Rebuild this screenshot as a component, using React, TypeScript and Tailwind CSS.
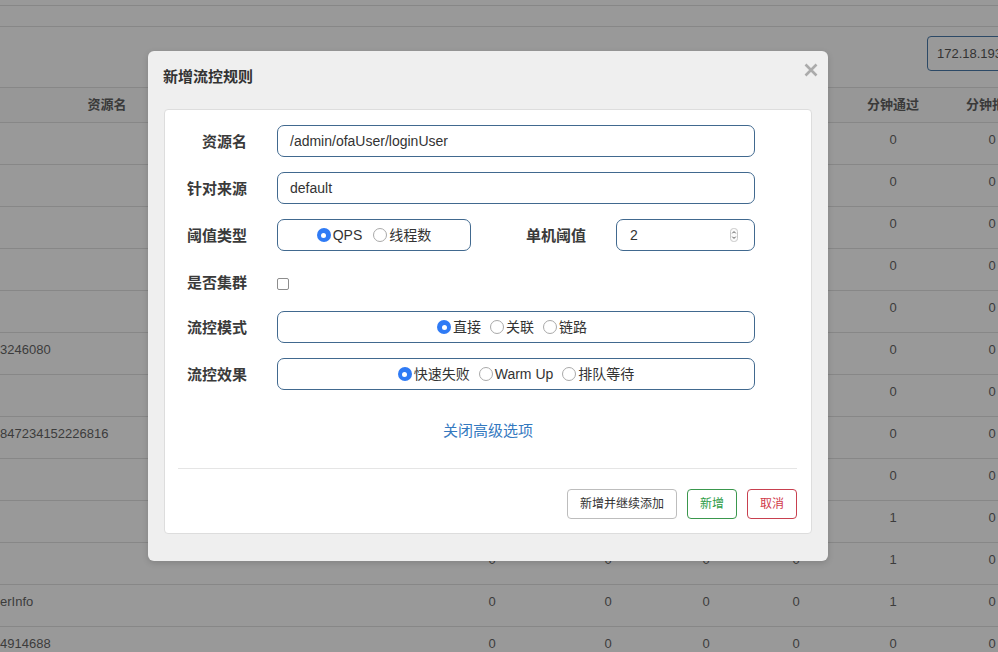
import React from "react";

const FONT = "font-['Liberation_Sans','Noto_Sans_CJK_SC',sans-serif]";

type Row = { left: string; nums: string[] };

const rows: Row[] = [
  { left: "", nums: ["0", "0", "0", "0", "0", "0"] },
  { left: "", nums: ["0", "0", "0", "0", "0", "0"] },
  { left: "", nums: ["0", "0", "0", "0", "0", "0"] },
  { left: "", nums: ["0", "0", "0", "0", "0", "0"] },
  { left: "", nums: ["0", "0", "0", "0", "0", "0"] },
  { left: "3246080", nums: ["0", "0", "0", "0", "0", "0"] },
  { left: "", nums: ["0", "0", "0", "0", "0", "0"] },
  { left: "847234152226816", nums: ["0", "0", "0", "0", "0", "0"] },
  { left: "", nums: ["0", "0", "0", "0", "0", "0"] },
  { left: "", nums: ["0", "0", "0", "0", "1", "0"] },
  { left: "", nums: ["0", "0", "0", "0", "1", "0"] },
  { left: "erInfo", nums: ["0", "0", "0", "0", "1", "0"] },
  { left: "4914688", nums: ["0", "0", "0", "0", "0", "0"] },
];

function NumCells({ nums }: { nums: string[] }) {
  return (
    <>
      <div className="w-[104px] shrink-0 text-center">{nums[0]}</div>
      <div className="w-[128px] shrink-0 text-center">{nums[1]}</div>
      <div className="w-[68px] shrink-0 text-center">{nums[2]}</div>
      <div className="w-[112px] shrink-0 text-center">{nums[3]}</div>
      <div className="w-[82px] shrink-0 text-center">{nums[4]}</div>
      <div className="w-[116px] shrink-0 text-center">{nums[5]}</div>
    </>
  );
}

function Radio({ checked, label }: { checked?: boolean; label: string }) {
  return (
    <span className="flex items-center gap-[2px]">
      {checked ? (
        <span className="w-[14px] h-[14px] rounded-full bg-[#2f7bf5] flex items-center justify-center">
          <span className="w-[5px] h-[5px] rounded-full bg-white" />
        </span>
      ) : (
        <span className="w-[14px] h-[14px] rounded-full bg-white border border-[#a9a9a9]" />
      )}
      <span>{label}</span>
    </span>
  );
}

function Label({ children, w = "w-[82px]" }: { children: React.ReactNode; w?: string }) {
  return (
    <div className={`${w} shrink-0 text-right text-[15px] font-bold text-[#3a3a3a] leading-[21px]`}>{children}</div>
  );
}

export default function App() {
  return (
    <div className={`${FONT} relative w-[998px] h-[652px] overflow-hidden bg-[#999999] text-[#3c3c3c] text-[13px]`}>
      {/* background page */}
      <div className="h-[6px] border-b border-[#878787]" />
      <div className="h-[21px] border-b border-[#878787]" />
      <div className="h-[60px] flex items-start pt-[9px]">
        <div className="ml-[927px] w-[120px] h-[35px] shrink-0 border border-[#2c4966] rounded-[4px] flex items-center pl-[9px] text-[13px] text-[#333]">
          172.18.193.1
        </div>
      </div>
      <div className="h-[36px] border-t border-b border-[#878787] bg-[#979797] flex items-center font-bold text-[#3a3a3a]">
        <div className="w-[214px] shrink-0 text-center">资源名</div>
        <div className="w-[226px] shrink-0" />
        <div className="w-[104px] shrink-0" />
        <div className="w-[128px] shrink-0" />
        <div className="w-[68px] shrink-0" />
        <div className="w-[112px] shrink-0" />
        <div className="w-[82px] shrink-0 text-center whitespace-nowrap">分钟通过</div>
        <div className="w-[116px] shrink-0 text-center whitespace-nowrap">分钟拒绝</div>
      </div>
      {rows.map((r, i) => (
        <div key={i} className="h-[42px] border-b border-[#878787] flex items-center pb-[8px]">
          <div className="w-[214px] shrink-0 whitespace-nowrap overflow-hidden">{r.left}</div>
          <div className="w-[226px] shrink-0" />
          <NumCells nums={r.nums} />
        </div>
      ))}

      {/* modal */}
      <div className="absolute left-[148px] top-[51px] w-[680px] h-[510px] rounded-[6px] bg-[#efefef] shadow-[0_2px_6px_rgba(0,0,0,0.15)]">
        <div className="h-[58px] flex items-start justify-between pl-[15px] pr-[10px] pt-[15px]">
          <div className="text-[15px] font-bold leading-[21px] text-[#333]">新增流控规则</div>
          <svg width="14" height="14" viewBox="0 0 14 14" className="mt-[-3px]">
            <path d="M1.5 1.5 L12.5 12.5 M12.5 1.5 L1.5 12.5" stroke="#ababab" strokeWidth="2.6" strokeLinecap="butt" />
          </svg>
        </div>
        <div className="mx-[16px] h-[425px] bg-white border border-[#dddddd] rounded-[4px] pt-[15px] text-[14px] text-[#333]">
          {/* 资源名 */}
          <div className="flex items-center h-[32px] mb-[15px]">
            <Label>资源名</Label>
            <div className="ml-[30px] w-[478px] h-[32px] border border-[#41698f] rounded-[7px] flex items-center pl-[12px]">
              /admin/ofaUser/loginUser
            </div>
          </div>
          {/* 针对来源 */}
          <div className="flex items-center h-[32px] mb-[15px]">
            <Label>针对来源</Label>
            <div className="ml-[30px] w-[478px] h-[32px] border border-[#41698f] rounded-[7px] flex items-center pl-[12px]">
              default
            </div>
          </div>
          {/* 阈值类型 */}
          <div className="flex items-center h-[32px] mb-[15px]">
            <Label>阈值类型</Label>
            <div className="ml-[30px] w-[194px] h-[32px] border border-[#41698f] rounded-[7px] flex items-center justify-center gap-[11px]">
              <Radio checked label="QPS" />
              <Radio label="线程数" />
            </div>
            <Label w="w-[115px]">单机阈值</Label>
            <div className="ml-[30px] w-[139px] h-[32px] border border-[#41698f] rounded-[7px] flex items-center pl-[13px] pr-[16px] justify-between">
              <span>2</span>
              <svg width="8" height="14" viewBox="0 0 8 14">
                <rect x="0.5" y="0.5" width="7" height="13" rx="3" fill="#fafafa" stroke="#c8c8c8" />
                <path d="M2.3 5.3 L4 3.6 L5.7 5.3 M2.3 8.7 L4 10.4 L5.7 8.7" stroke="#555" strokeWidth="1" fill="none" />
              </svg>
            </div>
          </div>
          {/* 是否集群 */}
          <div className="flex items-center h-[32px] mb-[13px]">
            <Label>是否集群</Label>
            <div className="ml-[30px] w-[12px] h-[12px] mt-[3px] border border-[#8d8d8d] rounded-[2px] bg-white" />
          </div>
          {/* 流控模式 */}
          <div className="flex items-center h-[32px] mb-[15px]">
            <Label>流控模式</Label>
            <div className="ml-[30px] w-[478px] h-[32px] border border-[#41698f] rounded-[7px] flex items-center justify-center gap-[9px] pr-[8px]">
              <Radio checked label="直接" />
              <Radio label="关联" />
              <Radio label="链路" />
            </div>
          </div>
          {/* 流控效果 */}
          <div className="flex items-center h-[32px]">
            <Label>流控效果</Label>
            <div className="ml-[30px] w-[478px] h-[32px] border border-[#41698f] rounded-[7px] flex items-center justify-center gap-[9px]">
              <Radio checked label="快速失败" />
              <Radio label="Warm Up" />
              <Radio label="排队等待" />
            </div>
          </div>
          <div className="mt-[30px] text-center text-[15px] leading-[21px] text-[#3479bf]">关闭高级选项</div>
          <div className="mt-[27px] ml-[13px] mr-[14px] h-px bg-[#e5e5e5]" />
          <div className="mt-[20px] mr-[14px] flex justify-end gap-[10px] text-[12px]">
            <div className="h-[30px] px-[12px] border border-[#bdbdbd] rounded-[4px] flex items-center text-[#333] bg-white">新增并继续添加</div>
            <div className="h-[30px] px-[12px] border border-[#3a974d] rounded-[4px] flex items-center text-[#2e9c47] bg-white">新增</div>
            <div className="h-[30px] px-[12px] border border-[#c8404f] rounded-[4px] flex items-center text-[#d0394a] bg-white">取消</div>
          </div>
        </div>
      </div>
    </div>
  );
}
